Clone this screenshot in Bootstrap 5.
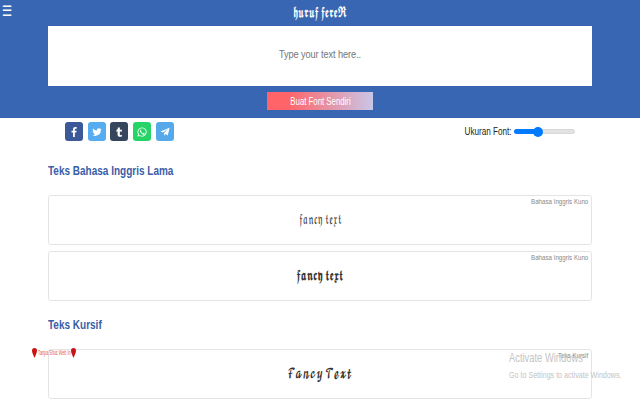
<!DOCTYPE html>
<html lang="id">
<head>
<meta charset="utf-8">
<title>huruf fereR</title>
<link href="https://cdn.jsdelivr.net/npm/bootstrap@5.3.0/dist/css/bootstrap.min.css" rel="stylesheet">
<style>
html,body{height:400px;overflow:hidden;}
body{font-family:"Liberation Sans",Arial,sans-serif;color:#333;background:#fff;position:relative;font-size:10px;}
.hero{background:#3966b3;height:118px;padding-top:5px;position:relative;}
.menu-btn{position:absolute;left:2px;top:2px;color:#fff;font-size:15px;line-height:18px;transform:scaleX(.75);transform-origin:left center;}
.hero-title{color:#fff;font-size:12px;font-weight:700;line-height:16px;height:21px;font-family:"DejaVu Math TeX Gyre","DejaVu Serif","Liberation Serif",serif;transform:scaleX(.6);}
.type-box{width:680px;height:60px;margin-left:-20px;background:#fff;border:0;border-radius:0;text-align:center;font-size:12px;padding-top:20px;resize:none;display:block;font-family:"Liberation Sans",sans-serif;transform:scaleX(.75);}
.type-box::placeholder{color:#757575;opacity:1;}
.type-box{transform:scaleX(.8);letter-spacing:-.1px;font-size:11.500px;}
.make-btn{width:106px;height:18px;margin-top:6px;padding:0;border:0;border-radius:0;color:#fff;font-size:11px;font-family:"Liberation Sans",sans-serif;background:linear-gradient(90deg,#ff6468 20%,#c9c6e8 100%);}
.make-btn span{display:inline-block;transform:scaleX(.71);}
.tools{padding:4px 65px 0 65px;height:30px;}
.share-row{gap:4.7px;}
.share-btn{width:18px;height:19px;border-radius:3px;color:#fff;}
.share-btn svg{width:10px;height:10px;fill:#fff;}
.fb{background:#3b5998;}.tw{background:#55acee;}.tu{background:#35465c;}.wa{background:#25d366;}.tg{background:#55a9ea;}
.size-box{height:19px;}
.size-label{font-size:11px;color:#222;display:inline-block;transform:scaleX(.74);transform-origin:right center;}
.size-track{width:61px;height:5px;border-radius:3px;background:#e2e2e2;border:1px solid #d8d8d8;position:relative;margin-left:2px;}
.size-fill{width:23px;height:5px;margin:-1px;border-radius:3px;background:#007bff;}
.size-thumb{position:absolute;left:18px;top:-3.5px;width:10px;height:10px;border-radius:50%;background:#007bff;}
.main-wrap{padding:0 48px;}
.sect-title{color:#3a5ea8;font-size:12.5px;font-weight:700;line-height:14px;margin:0;transform:scaleX(.8);transform-origin:left center;}
.font-card{height:50px;border:1px solid #e4e4e4;border-radius:3px;position:relative;color:#333;}
.card-gap{margin-top:17px;}
.card-near{margin-top:6px;}
.font-tag{position:absolute;right:3px;top:1px;font-size:8px;color:#888;line-height:10px;transform:scaleX(.77);transform-origin:right center;white-space:nowrap;}
.fancy{display:inline-block;font-family:"DejaVu Math TeX Gyre","DejaVu Serif","Liberation Serif",serif;font-size:12px;line-height:1;}
.sq-a{transform:scaleX(.66);}
.sq-b{transform:scaleX(.65);}
.sq-c{transform:scaleX(.62);}
.t-one{margin-top:16px;}
.t-two{margin-top:17px;}
.win-mark{position:absolute;left:509px;top:351px;color:#c4c4c4;font-family:"Liberation Sans",sans-serif;line-height:1;white-space:nowrap;}
.win-a{font-size:13px;transform:scaleX(.72);transform-origin:left center;}
.win-b{font-size:9.500px;margin-top:6px;transform:scaleX(.75);transform-origin:left center;}
.red-tag{position:absolute;left:32px;top:347px;color:#e05a5a;display:flex;align-items:center;gap:1px;}
.red-tag svg{width:5px;height:12px;fill:#c81414;flex:none;}
.red-text{width:32px;font-size:8px;white-space:nowrap;transform:scaleX(.47);transform-origin:left center;}
</style>
</head>
<body>
<header class="hero text-center">
  <div class="menu-btn">☰</div>
  <div class="hero-title">𝖍𝖚𝖗𝖚𝖋 𝖋𝖊𝖗𝖊𝕽</div>
  <textarea class="type-box form-control" placeholder="Type your text here.."></textarea>
  <button class="btn make-btn" type="button"><span>Buat Font Sendiri</span></button>
</header>
<div class="tools d-flex justify-content-between">
  <div class="d-flex share-row">
    <a class="share-btn fb d-flex align-items-center justify-content-center"><svg viewBox="0 0 24 24"><path d="M14 24V13h3.600l.6-4.300H14V6c0-1.200.4-2 2.100-2h2.200V.2C17.900.1 16.600 0 15.100 0 11.900 0 9.700 2 9.700 5.500v3.200H6V13h3.700v11z"/></svg></a>
    <a class="share-btn tw d-flex align-items-center justify-content-center"><svg viewBox="0 0 24 24"><path d="M23 5c-.8.400-1.700.6-2.600.8.900-.6 1.600-1.400 2-2.500-.9.500-1.900.9-2.900 1.100A4.600 4.600 0 0 0 11.700 8.600 13 13 0 0 1 2.300 3.800a4.600 4.600 0 0 0 1.400 6.100c-.7 0-1.400-.2-2-.6 0 2.300 1.600 4.200 3.700 4.600-.7.200-1.400.2-2.100.1.600 1.900 2.300 3.200 4.300 3.200A9.200 9.200 0 0 1 1 19.100a13 13 0 0 0 20-11.600c.9-.6 1.600-1.400 2-2.500z"/></svg></a>
    <a class="share-btn tu d-flex align-items-center justify-content-center"><svg viewBox="0 0 24 24"><path d="M14 1v5.500h5V11h-5v6.500c0 2.400 2.500 2.500 5 1.200v4C13 25 8.500 23 8.500 18v-7H5.500V7.500C8 6.700 9.300 4.500 9.500 1z"/></svg></a>
    <a class="share-btn wa d-flex align-items-center justify-content-center"><svg viewBox="0 0 24 24"><path fill-rule="evenodd" d="M12 1a11 11 0 0 0-9.400 16.600L1 23l5.600-1.500A11 11 0 1 0 12 1zm0 2a9 9 0 1 1-4.900 16.500l-3 .8.800-2.900A9 9 0 0 1 12 3zM8.500 7c-.5 0-1.500.8-1.500 2.500S8.300 13 8.500 13.300c.2.300 2.500 4 6.200 5 1.500.4 3.300-.5 3.600-1.800.2-.9.100-1.300-.1-1.400l-2.300-1.100c-.3-.1-.5 0-.7.300l-.8 1c-.2.200-.4.200-.7.100-1.300-.5-3-1.900-3.700-3.200-.1-.3 0-.5.200-.7l.6-.8c.1-.2.100-.4 0-.6L9.800 7.800C9.500 7 9 7 8.500 7z"/></svg></a>
    <a class="share-btn tg d-flex align-items-center justify-content-center"><svg viewBox="0 0 24 24"><path d="M23 2 1 11l6 2.200L19 5 10 14.500V21l3.500-4.200 5 3.700z"/></svg></a>
  </div>
  <div class="d-flex align-items-center size-box">
    <span class="size-label">Ukuran Font:</span>
    <div class="size-track"><div class="size-fill"></div><div class="size-thumb"></div></div>
  </div>
</div>
<main class="main-wrap">
  <h2 class="sect-title t-one">Teks Bahasa Inggris Lama</h2>
  <div class="font-card card-gap d-flex align-items-center justify-content-center"><span class="font-tag">Bahasa Inggris Kuno</span><span class="fancy sq-a">𝔣𝔞𝔫𝔠𝔶 𝔱𝔢𝔵𝔱</span></div>
  <div class="font-card card-near d-flex align-items-center justify-content-center"><span class="font-tag">Bahasa Inggris Kuno</span><span class="fancy sq-b fw-bold">𝖋𝖆𝖓𝖈𝖞 𝖙𝖊𝖝𝖙</span></div>
  <h2 class="sect-title t-two">Teks Kursif</h2>
  <div class="font-card card-gap d-flex align-items-center justify-content-center"><span class="font-tag">Teks Kursif</span><span class="fancy sq-c">𝓕𝓪𝓷𝓬𝔂 𝓣𝓮𝔁𝓽</span></div>
</main>
<div class="red-tag"><svg viewBox="0 0 6 12"><path d="M0 3a3 3 0 0 1 6 0c0 3-2 6-3 9C2 9 0 6 0 3z"/></svg><span class="red-text">Tanpa Situs Web In</span><svg viewBox="0 0 6 12"><path d="M0 3a3 3 0 0 1 6 0c0 3-2 6-3 9C2 9 0 6 0 3z"/></svg></div>
<div class="win-mark"><div class="win-a">Activate Windows</div><div class="win-b">Go to Settings to activate Windows.</div></div>
<script src="https://cdn.jsdelivr.net/npm/bootstrap@5.3.0/dist/js/bootstrap.bundle.min.js"></script>
</body>
</html>
